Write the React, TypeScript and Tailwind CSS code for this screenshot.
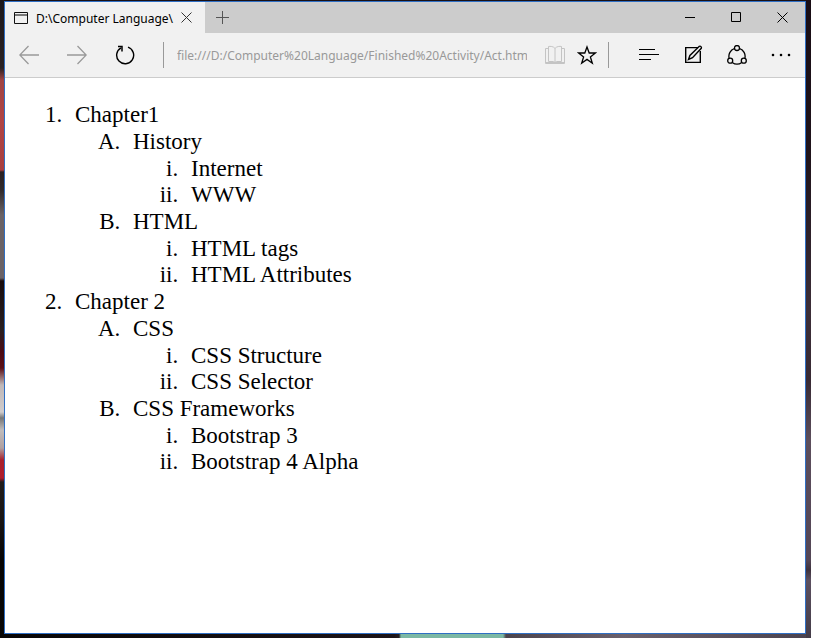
import type { ReactNode } from 'react';

const chapters = [
  {
    title: 'Chapter1',
    sections: [
      { title: 'History', items: ['Internet', 'WWW'] },
      { title: 'HTML', items: ['HTML tags', 'HTML Attributes'] },
    ],
  },
  {
    title: 'Chapter 2',
    sections: [
      { title: 'CSS', items: ['CSS Structure', 'CSS Selector'] },
      { title: 'CSS Frameworks', items: ['Bootstrap 3', 'Bootstrap 4 Alpha'] },
    ],
  },
];

function CaptionButton({ label, children }: { label: string; children: ReactNode }) {
  return (
    <button type="button" aria-label={label} className="flex h-full w-[46px] items-center justify-center text-black">
      <svg width="11" height="11" viewBox="0 0 11 11" fill="none" stroke="currentColor">
        {children}
      </svg>
    </button>
  );
}

function ToolButton({ label, className = 'text-black', children }: { label: string; className?: string; children: ReactNode }) {
  return (
    <button type="button" aria-label={label} className={`w-5 shrink-0 ${className}`}>
      <svg className="block" width="20" height="20" viewBox="0 0 20 20" fill="none" stroke="currentColor">
        {children}
      </svg>
    </button>
  );
}

function TitleBar() {
  return (
    <header className="flex h-[31px] items-center bg-[#cccccc]">
      <div className="flex h-full w-[200px] items-center bg-[#f1f1f1] pr-[13px] pl-[9px]">
        <svg className="shrink-0" width="14" height="12" viewBox="0 0 14 12" fill="none" stroke="#111">
          <path d="M.5 .5h13v11H.5z" />
          <path d="M1 3h12" stroke="#777" strokeWidth="2" />
        </svg>
        <span className="ml-2 flex-1 overflow-hidden pt-0.5 text-[12px] leading-[18px] whitespace-nowrap text-black">
          D:\Computer Language\
        </span>
        <button type="button" aria-label="Close tab" className="shrink-0 text-[#333]">
          <svg className="block" width="11" height="11" viewBox="0 0 11 11" fill="none" stroke="currentColor">
            <path d="M.5 .5l10 10M10.5 .5l-10 10" />
          </svg>
        </button>
      </div>
      <button type="button" aria-label="New tab" className="ml-[11px] text-[#555]">
        <svg className="block" width="13" height="13" viewBox="0 0 13 13" fill="none" stroke="currentColor">
          <path d="M0 6.5h13M6.5 0v13" />
        </svg>
      </button>
      <div className="ml-auto flex h-full">
        <CaptionButton label="Minimize">
          <path d="M0 5.5h10" />
        </CaptionButton>
        <CaptionButton label="Maximize">
          <path d="M.5 .5h9v9h-9z" />
        </CaptionButton>
        <CaptionButton label="Close">
          <path d="M.5 .5l10 10M10.5 .5l-10 10" />
        </CaptionButton>
      </div>
    </header>
  );
}

function ToolBar() {
  return (
    <nav className="flex h-[45px] items-center border-b border-[#cccccc] bg-[#f1f1f1] px-[14px]">
      <div className="flex gap-7">
        <ToolButton label="Back" className="text-[#999]">
          <path d="M20 10H1M9.5 1L.8 10l8.7 9" strokeWidth="1.3" />
        </ToolButton>
        <ToolButton label="Forward" className="text-[#999]">
          <path d="M0 10h19M10.5 1l8.7 9-8.7 9" strokeWidth="1.3" />
        </ToolButton>
        <ToolButton label="Refresh">
          <path d="M13 2.2a8.500 8.500 0 1 1-7 .6" strokeWidth="1.400" />
          <path d="M3 1.500h4v5" strokeWidth="1.500" />
        </ToolButton>
      </div>
      <div className="ml-7 h-[26px] w-px bg-[#999]" />
      <input
        type="text"
        aria-label="Address"
        defaultValue="file:///D:/Computer%20Language/Finished%20Activity/Act.html"
        className="ml-[13px] h-6 min-w-0 flex-1 bg-transparent text-[12px] text-[#999] outline-none"
      />
      <div className="ml-[18px] flex gap-3">
        <ToolButton label="Reading view" className="text-[#c4c4c4]">
          <path d="M10 3.500V17M10 3.500C8.500 1.200 5 1.200 3.500 1.500V16.500H8.500L10 17.500l1.500-1H16.500V1.500C15 1.200 11.500 1.200 10 3.500z" />
          <path d="M3 3.500H.5v15h19v-15H17" />
          <path d="M1 17.500h18" />
        </ToolButton>
        <ToolButton label="Add to favorites">
          <path d="M10 2l2.200 6h6.200l-5 4 1.900 6.200L10 14.400l-5.300 3.800L6.600 12l-5-4h6.200z" strokeWidth="1.300" />
        </ToolButton>
      </div>
      <div className="ml-[11px] h-[26px] w-px bg-[#999]" />
      <div className="ml-[30px] flex gap-6">
        <ToolButton label="Hub">
          <path d="M0 4.500h16M0 9.500h20M0 14.500h12" />
        </ToolButton>
        <ToolButton label="Web note">
          <path d="M15 2.600H2.700v14.800h14.600V6" strokeWidth="1.400" />
          <path d="M5.500 14.500l1.400-4L16.300 1.300c1.300-.6 2.600 .8 2 2L9.500 12.700z" strokeWidth="1.400" />
        </ToolButton>
        <ToolButton label="Share">
          <circle cx="10" cy="3" r="2.500" strokeWidth="1.300" />
          <circle cx="3.200" cy="15.700" r="2.500" strokeWidth="1.300" />
          <circle cx="16.800" cy="15.700" r="2.500" strokeWidth="1.300" />
          <path d="M7.400 3.500A8.300 8.300 0 0 0 2.100 13.200M12.600 3.500a8.300 8.300 0 0 1 5.300 9.700M5.200 17.500a8.300 8.300 0 0 0 9.600 0" strokeWidth="1.300" />
        </ToolButton>
        <ToolButton label="More">
          <path d="M1 9h2v2H1zM9 9h2v2H9zM17 9h2v2h-2z" fill="currentColor" stroke="currentColor" strokeWidth=".3" />
        </ToolButton>
      </div>
    </nav>
  );
}

export default function App() {
  return (
    <div className="min-h-screen bg-white pr-2 font-['Noto_Sans','Open_Sans',sans-serif]">
      <div className="grid min-h-screen grid-cols-[4px_1fr_5px] grid-rows-[1px_1fr_4px] bg-[#1a1014]">
        <div className="row-span-3 bg-[linear-gradient(#1c171a_0,#2a2224_68px,#a04444_80px,#b04444_120px,#a83f40_170px,#2a2022_172px,#302a2c_190px,#6a6266_215px,#6a6266_278px,#180c0e_281px,#281e20_330px,#4a0a14_352px,#5a1018_368px,#c0b8b8_385px,#d0cccc_412px,#777_418px,#c0bcbc_430px,#b0a0a0_448px,#a8202c_460px,#b01c2c_478px,#201c1c_482px,#181414_520px,#050404_560px,#080606_638px)]" />
        <div />
        <div className="row-span-3 bg-[linear-gradient(#180c14_0,#20141c_160px,#3c2e38_310px,#382a34_380px,#5c4e5c_440px,#544656_560px,#3e323e_570px,#5c5060_580px,#443c48_638px)]" />
        <main className="flex flex-col border border-[#2f6fc4] bg-white">
          <TitleBar />
          <ToolBar />
          <article className="px-3 pt-[23px] pb-4 font-['Liberation_Serif',serif] text-[23px] leading-[27px] text-black">
            <ol className="list-decimal pl-[51px]">
              {chapters.map((chapter) => (
                <li key={chapter.title} className="pl-[7px]">
                  {chapter.title}
                  <ol className="list-[upper-alpha] pl-[51px]">
                    {chapter.sections.map((section) => (
                      <li key={section.title} className="pl-[7px]">
                        {section.title}
                        <ol className="list-[lower-roman] pt-px pl-[51px] leading-[26px]">
                          {section.items.map((item) => (
                            <li key={item} className="pl-[7px]">
                              {item}
                            </li>
                          ))}
                        </ol>
                      </li>
                    ))}
                  </ol>
                </li>
              ))}
            </ol>
          </article>
        </main>
        <div className="bg-[linear-gradient(90deg,#080606_0,#1c1418_390px,#241c20_395px,#7cb8a4_397px,#7cb8a4_499px,#4c444c_502px,#6a606c_620px,#4c4450_800px)]" />
      </div>
    </div>
  );
}
